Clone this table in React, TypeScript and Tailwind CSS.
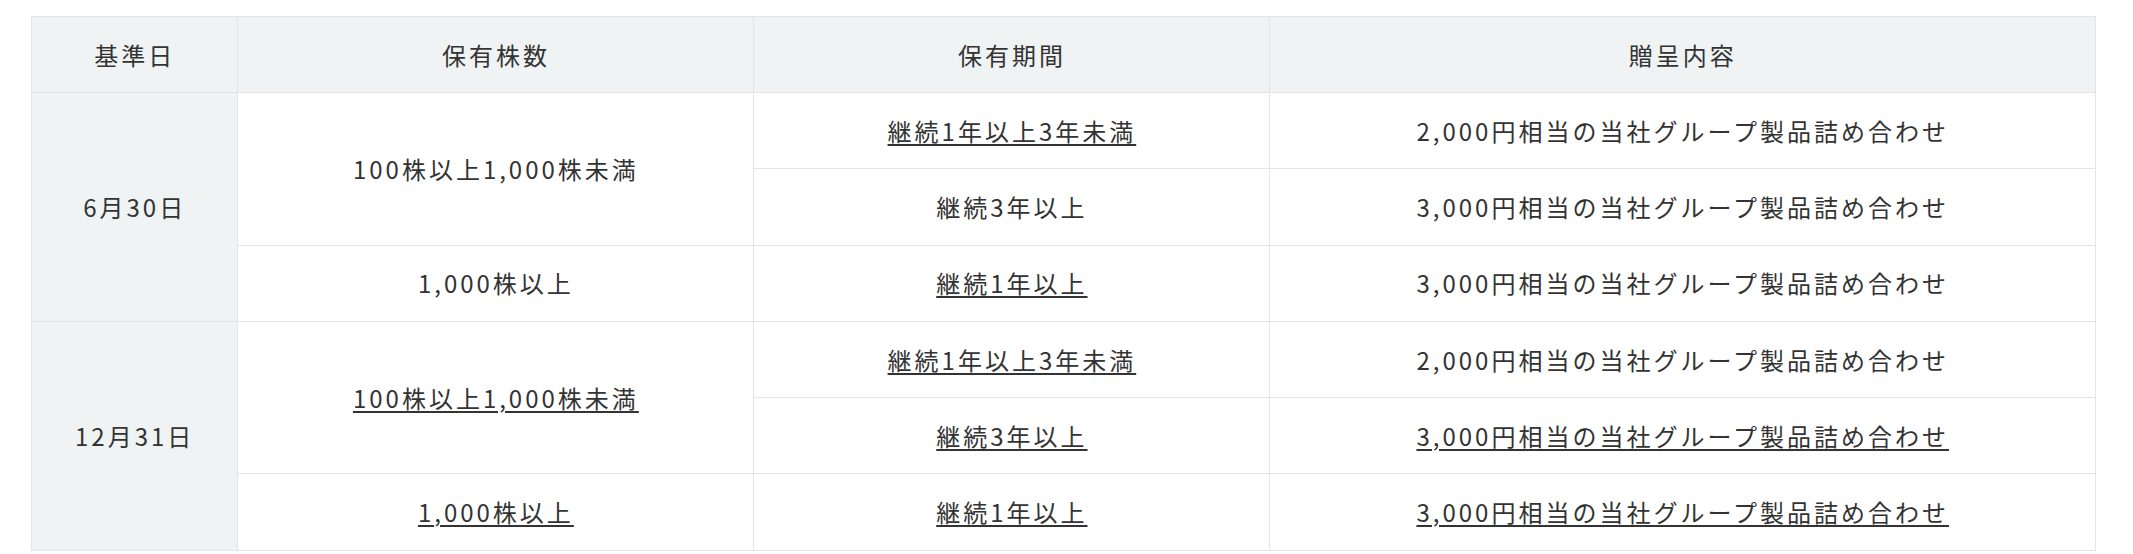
import React from "react";

type Cell = { text: string; u?: boolean };

const rows: {
  date?: { text: string; span: number };
  shares?: { text: string; span: number; u?: boolean };
  period: Cell;
  gift: Cell;
}[] = [
  {
    date: { text: "6月30日", span: 3 },
    shares: { text: "100株以上1,000株未満", span: 2 },
    period: { text: "継続1年以上3年未満", u: true },
    gift: { text: "2,000円相当の当社グループ製品詰め合わせ" },
  },
  {
    period: { text: "継続3年以上" },
    gift: { text: "3,000円相当の当社グループ製品詰め合わせ" },
  },
  {
    shares: { text: "1,000株以上", span: 1 },
    period: { text: "継続1年以上", u: true },
    gift: { text: "3,000円相当の当社グループ製品詰め合わせ" },
  },
  {
    date: { text: "12月31日", span: 3 },
    shares: { text: "100株以上1,000株未満", span: 2, u: true },
    period: { text: "継続1年以上3年未満", u: true },
    gift: { text: "2,000円相当の当社グループ製品詰め合わせ" },
  },
  {
    period: { text: "継続3年以上", u: true },
    gift: { text: "3,000円相当の当社グループ製品詰め合わせ", u: true },
  },
  {
    shares: { text: "1,000株以上", span: 1, u: true },
    period: { text: "継続1年以上", u: true },
    gift: { text: "3,000円相当の当社グループ製品詰め合わせ", u: true },
  },
];

const td =
  "border border-[#e2e4e5] text-center align-middle p-0 leading-[36px]";

function T({ c }: { c: Cell }) {
  return c.u ? (
    <a className="underline decoration-[1.5px] underline-offset-[3px] text-[#333]">{c.text}</a>
  ) : (
    <span>{c.text}</span>
  );
}

export default function App() {
  return (
    <div
      className="w-[2133px] h-[554px] bg-white pt-[16px] pl-[31px]"
      style={{ fontFamily: '"Noto Sans CJK JP", "Noto Sans", sans-serif' }}
    >
      <table className="w-[2065px] border-collapse table-fixed text-[24px] tracking-[3px] text-[#333]">
        <colgroup>
          <col className="w-[10%]" />
          <col className="w-[25%]" />
          <col className="w-[25%]" />
          <col className="w-[40%]" />
        </colgroup>
        <thead>
          <tr className="bg-[#f0f3f4] h-[76px]">
            <th className={td + " font-normal"}>基準日</th>
            <th className={td + " font-normal"}>保有株数</th>
            <th className={td + " font-normal"}>保有期間</th>
            <th className={td + " font-normal"}>贈呈内容</th>
          </tr>
        </thead>
        <tbody>
          {rows.map((r, i) => (
            <tr key={i} className="h-[76.3px]">
              {r.date && (
                <td rowSpan={r.date.span} className={td + " bg-[#f0f3f4]"}>
                  {r.date.text}
                </td>
              )}
              {r.shares && (
                <td rowSpan={r.shares.span} className={td}>
                  <T c={r.shares} />
                </td>
              )}
              <td className={td}>
                <T c={r.period} />
              </td>
              <td className={td}>
                <T c={r.gift} />
              </td>
            </tr>
          ))}
        </tbody>
      </table>
    </div>
  );
}
